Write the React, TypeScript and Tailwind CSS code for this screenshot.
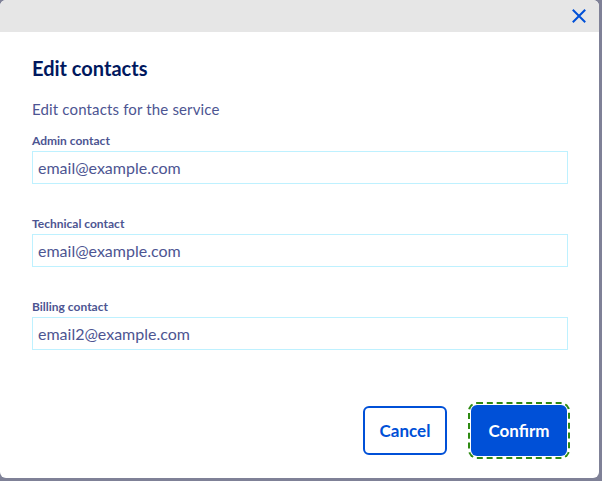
import React from "react";

const font = { fontFamily: "Lato, 'Noto Sans', sans-serif" };

function Field({ label, value }: { label: string; value: string }) {
  return (
    <div className="flex flex-col">
      <label className="text-[12px] font-bold leading-[14px] text-[#4d5592]">{label}</label>
      <div className="mt-[3px] h-[33px] w-[536px] border border-[#bef1ff] flex items-center pl-[5px] text-[16px] text-[#4d5592]">
        {value}
      </div>
    </div>
  );
}

export default function App() {
  return (
    <div className="w-[602px] h-[481px] bg-[#7f8197]" style={font}>
      <div className="w-[599px] h-[478px] bg-white rounded-[6px] overflow-hidden flex flex-col">
        <div className="h-[32px] bg-[#e6e6e6] flex items-center justify-end pr-[13px] shrink-0">
          <svg width="14" height="14" viewBox="0 0 14 14">
            <path d="M1.5 1.5 L12.5 12.5 M12.5 1.5 L1.5 12.5" stroke="#0050d7" strokeWidth="2" strokeLinecap="square" />
          </svg>
        </div>
        <div className="flex flex-col px-[32px] pt-[24px]">
          <h2 className="text-[20px] font-bold leading-[24px] text-[#00185e]">Edit contacts</h2>
          <p className="mt-[19px] text-[15px] leading-[20px] tracking-[0.15px] text-[#4d5592]">Edit contacts for the service</p>
          <div className="mt-[15px] flex flex-col gap-[33px]">
            <Field label="Admin contact" value="email@example.com" />
            <Field label="Technical contact" value="email@example.com" />
            <Field label="Billing contact" value="email2@example.com" />
          </div>
          <div className="mt-[55px] h-[51px] flex items-center justify-end gap-[24px] pr-[0px]">
            <button className="h-[49px] w-[84px] rounded-[6px] border-2 border-[#0050d7] bg-white text-[17px] font-bold text-[#0050d7]">
              Cancel
            </button>
            <button className="h-[51px] w-[96px] rounded-[6px] bg-[#0050d7] text-[17px] font-bold text-white outline-2 outline-dashed outline-[#2e8a12] outline-offset-[1px]">
              Confirm
            </button>
          </div>
        </div>
      </div>
    </div>
  );
}
